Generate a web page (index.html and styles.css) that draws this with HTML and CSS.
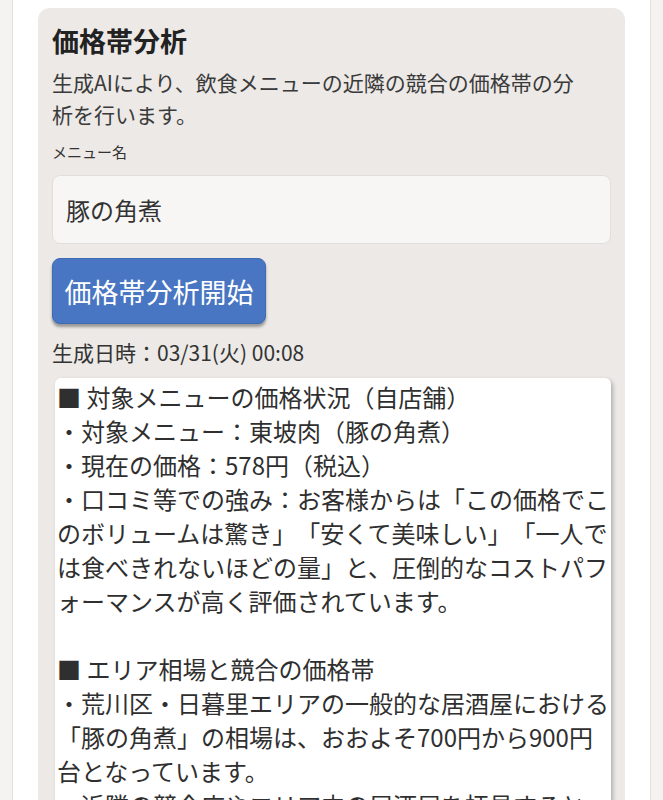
FILE: index.html
```html
<!DOCTYPE html>
<html lang="ja">
<head>
  <meta charset="UTF-8" />
  <meta name="viewport" content="width=device-width, initial-scale=1.0" />
  <title>価格帯分析</title>
  <link rel="stylesheet" href="styles.css">
</head>
<body>
  <div class="frame">
    <section class="card">
      <h2 class="card-title">価格帯分析</h2>
      <p class="card-desc">生成AIにより、飲食メニューの近隣の競合の価格帯の分析を行います。</p>

      <label class="field-label" for="menuName">メニュー名</label>
      <input type="text" id="menuName" class="field-input" value="豚の角煮" />

      <button class="btn-primary">価格帯分析開始</button>

      <p class="gen-date">生成日時：03/31(火) 00:08</p>

      <div class="result">■ 対象メニューの価格状況（自店舗）
・対象メニュー：東坡肉（豚の角煮）
・現在の価格：578円（税込）
・口コミ等での強み：お客様からは「この価格でこのボリュームは驚き」「安くて美味しい」「一人では食べきれないほどの量」と、圧倒的なコストパフォーマンスが高く評価されています。

■ エリア相場と競合の価格帯
・荒川区・日暮里エリアの一般的な居酒屋における「豚の角煮」の相場は、おおよそ700円から900円台となっています。
・近隣の競合店やエリア内の居酒屋を拝見すると、角煮単品で800円前後の設定が多く見られます。</div>
    </section>
  </div>
</body>
</html>
```

FILE: styles.css
```css
/* 全体 */
body {
  margin: 0;
  padding: 0;
  background-color: #f4f3f1;
  color: #333;
  font-family: "Noto Sans CJK JP", "Noto Sans", sans-serif;
  text-spacing-trim: space-all;
}

.frame {
  margin: 0 12px;
  min-height: 800px;
  padding: 8px 25px 0;
  background-color: #fff;
  border-left: 1px solid #e3e1de;
  border-right: 1px solid #e3e1de;
}

/* カード */
.card {
  background-color: #ece9e6;
  border-radius: 12px;
  padding: 12px 14px 20px;
}

.card-title {
  margin: 0;
  font-size: 27px;
  font-weight: bold;
  line-height: 42px;
  color: #222;
}

.card-desc {
  margin: 4px 20px 0 0;
  font-size: 21px;
  line-height: 32px;
  color: #3a3a3a;
}

.field-label {
  display: block;
  margin-top: 11px;
  font-size: 15px;
  line-height: 22px;
  color: #333;
}

.field-input {
  display: block;
  box-sizing: border-box;
  width: 100%;
  height: 69px;
  margin-top: 12px;
  padding: 0 13px;
  font-family: inherit;
  font-size: 24px;
  color: #333;
  background-color: #f7f6f4;
  border: 1px solid #e2dfdb;
  border-radius: 8px;
  outline: none;
}

/* ボタン */
.btn-primary {
  display: block;
  margin-top: 14px;
  width: 214px;
  height: 66px;
  padding: 0;
  font-family: inherit;
  font-size: 27px;
  color: #fff;
  background-color: #4876c3;
  border: 1px solid #3f6bb4;
  border-radius: 8px;
  box-shadow: 0 3px 3px rgba(0, 0, 0, 0.35);
  cursor: pointer;
}

.gen-date {
  margin: 14px 0 0;
  font-size: 21px;
  line-height: 28px;
  color: #333;
}

/* 結果 */
.result {
  margin: 12px 0 0 3px;
  padding: 2px 2px 10px;
  background-color: #fff;
  border-radius: 6px;
  box-shadow: 2px 2px 4px rgba(0, 0, 0, 0.25);
  font-size: 24px;
  line-height: 34px;
  color: #2f2f2f;
  white-space: pre-wrap;
  line-break: loose;
}
```
